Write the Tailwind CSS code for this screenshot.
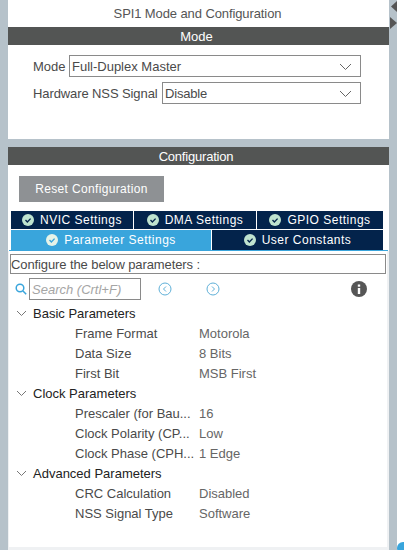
<!DOCTYPE html>
<html>
<head>
<script src="https://cdn.jsdelivr.net/npm/@tailwindcss/browser@4"></script>
</head>
<body class="m-0 bg-white">
<div class="relative w-[404px] h-[550px] overflow-hidden bg-white font-['Liberation_Sans',Arial,sans-serif] text-[13px] leading-none text-[#4a4a4a] whitespace-nowrap">
  <div class="w-[397px] h-[550px] bg-[#b6c2ca] pl-2 pr-2 flex flex-col">
    <section class="h-[139px] bg-white flex flex-col">
      <div class="h-[27px] flex items-center justify-center text-[#555] tracking-[-0.1px] pr-[2px]">SPI1 Mode and Configuration</div>
      <div class="h-[18px] bg-[#535554] text-white flex items-center justify-center pr-[4px]">Mode</div>
      <div class="pt-[10px] pl-[25px] flex flex-col gap-[5px]">
        <div class="flex items-center h-[22px]">
          <span class="w-[36px]">Mode</span>
          <div class="relative w-[292px] h-[22px] border border-[#8a8a8a] flex items-center pl-[2px]">Full-Duplex Master
            <svg class="absolute right-[8px] top-[7px]" width="13" height="8" viewBox="0 0 13 8" fill="none" stroke="#666" stroke-width="1"><path d="M1 1l5.500 5.500L12 1"/></svg>
          </div>
        </div>
        <div class="flex items-center h-[22px]">
          <span class="w-[129px] tracking-[-0.1px]">Hardware NSS Signal</span>
          <div class="relative w-[199px] h-[22px] border border-[#8a8a8a] flex items-center pl-[2px] tracking-[-0.2px]">Disable
            <svg class="absolute right-[8px] top-[7px]" width="13" height="8" viewBox="0 0 13 8" fill="none" stroke="#666" stroke-width="1"><path d="M1 1l5.500 5.500L12 1"/></svg>
          </div>
        </div>
      </div>
    </section>
    <section class="mt-2 h-[403px] bg-white flex flex-col">
      <div class="h-[18px] bg-[#535554] text-white flex items-center justify-center tracking-[-0.2px] pr-[5px]">Configuration</div>
      <div class="mt-[11px] ml-[11px] w-[145px] h-[26px] bg-[#8e9194] text-white text-[12px] flex items-center justify-center tracking-[0.35px]">Reset Configuration</div>
      <div class="mt-[9px] ml-[3px] w-[372px] flex flex-col text-white text-[12px] tracking-[0.5px]">
        <div class="h-[18px] flex bg-[#03234b]">
          <div class="w-[123px] flex items-center justify-center gap-[6px] border-r border-white"><svg width="12" height="12" viewBox="0 0 13 13"><circle cx="6.500" cy="6.500" r="6.500" fill="#bfe3cf"/><path d="M3.800 6.600l2 2 3.500-3.600" fill="none" stroke="#03234b" stroke-width="1.500"/></svg>NVIC Settings</div>
          <div class="w-[123px] flex items-center justify-center gap-[6px] border-r border-white"><svg width="12" height="12" viewBox="0 0 13 13"><circle cx="6.500" cy="6.500" r="6.500" fill="#bfe3cf"/><path d="M3.800 6.600l2 2 3.500-3.600" fill="none" stroke="#03234b" stroke-width="1.500"/></svg>DMA Settings</div>
          <div class="flex-1 flex items-center justify-center gap-[6px]"><svg width="12" height="12" viewBox="0 0 13 13"><circle cx="6.500" cy="6.500" r="6.500" fill="#bfe3cf"/><path d="M3.800 6.600l2 2 3.500-3.600" fill="none" stroke="#03234b" stroke-width="1.500"/></svg>GPIO Settings</div>
        </div>
        <div class="mt-[1px] h-[20px] flex bg-[#03234b]">
          <div class="w-[201px] bg-[#39a5dc] flex items-center justify-center gap-[6px] border-r border-white"><svg width="12" height="12" viewBox="0 0 13 13"><circle cx="6.500" cy="6.500" r="6.500" fill="#e6f3e8"/><path d="M3.800 6.600l2 2 3.500-3.600" fill="none" stroke="#39a5dc" stroke-width="1.500"/></svg>Parameter Settings</div>
          <div class="flex-1 flex items-center justify-center gap-[6px]"><svg width="12" height="12" viewBox="0 0 13 13"><circle cx="6.500" cy="6.500" r="6.500" fill="#bfe3cf"/><path d="M3.800 6.600l2 2 3.500-3.600" fill="none" stroke="#03234b" stroke-width="1.500"/></svg>User Constants</div>
        </div>
      </div>
      <div class="ml-[1px] w-[379px] h-[1px] bg-[#39a5dc]"></div>
      <div class="flex-1 flex flex-col border-l border-r-2 border-b-[3px] border-[#eff1f3] px-[1px]">
        <div class="h-[20px] mt-[3px] border border-[#8a8a8a] flex items-center tracking-[-0.1px]">Configure the below parameters :</div>
        <div class="relative h-[22px] mt-[4px] flex items-center">
          <svg class="ml-[5px]" width="12" height="12" viewBox="0 0 12 12" fill="none" stroke="#39a5dc" stroke-width="1.500"><circle cx="5" cy="5" r="3.800"/><path d="M8 8l3.200 3.200"/></svg>
          <div class="ml-[2px] w-[112px] h-[22px] border border-[#8a8a8a] flex items-center pl-[2px] italic text-[#a5a5a5]">Search (Crtl+F)</div>
          <svg class="ml-[17px]" width="14" height="14" viewBox="0 0 14 14" fill="none" stroke="#5fb0d8"><circle cx="7" cy="7" r="6"/><path d="M8 4.500L5.500 7 8 9.500"/></svg>
          <svg class="ml-[34px]" width="14" height="14" viewBox="0 0 14 14" fill="none" stroke="#5fb0d8"><circle cx="7" cy="7" r="6"/><path d="M6 4.500L8.500 7 6 9.500"/></svg>
          <svg class="ml-[131px]" width="16" height="16" viewBox="0 0 16 16"><circle cx="8" cy="8" r="8" fill="#565656"/><rect x="6.800" y="7" width="2.400" height="6" fill="#fff"/><rect x="6.800" y="3.500" width="2.400" height="2.200" fill="#fff"/></svg>
        </div>
        <div class="mt-[3px] flex flex-col">
          <div class="h-[20px] flex items-center"><svg class="ml-[6px]" width="11" height="7" viewBox="0 0 11 7" fill="none" stroke="#777"><path d="M1 1l4.500 4.500L10 1"/></svg><span class="ml-[6px] text-[#222]">Basic Parameters</span></div>
          <div class="h-[20px] flex items-center pl-[65px]"><span class="w-[124px]">Frame Format</span><span class="text-[#666]">Motorola</span></div>
          <div class="h-[20px] flex items-center pl-[65px]"><span class="w-[124px]">Data Size</span><span class="text-[#666]">8 Bits</span></div>
          <div class="h-[20px] flex items-center pl-[65px]"><span class="w-[124px]">First Bit</span><span class="text-[#666]">MSB First</span></div>
          <div class="h-[20px] flex items-center"><svg class="ml-[6px]" width="11" height="7" viewBox="0 0 11 7" fill="none" stroke="#777"><path d="M1 1l4.500 4.500L10 1"/></svg><span class="ml-[6px] text-[#222]">Clock Parameters</span></div>
          <div class="h-[20px] flex items-center pl-[65px]"><span class="w-[124px]">Prescaler (for Bau...</span><span class="text-[#666]">16</span></div>
          <div class="h-[20px] flex items-center pl-[65px]"><span class="w-[124px]">Clock Polarity (CP...</span><span class="text-[#666]">Low</span></div>
          <div class="h-[20px] flex items-center pl-[65px]"><span class="w-[124px]">Clock Phase (CPH...</span><span class="text-[#666]">1 Edge</span></div>
          <div class="h-[20px] flex items-center"><svg class="ml-[6px]" width="11" height="7" viewBox="0 0 11 7" fill="none" stroke="#777"><path d="M1 1l4.500 4.500L10 1"/></svg><span class="ml-[6px] text-[#222]">Advanced Parameters</span></div>
          <div class="h-[20px] flex items-center pl-[65px]"><span class="w-[124px]">CRC Calculation</span><span class="text-[#666]">Disabled</span></div>
          <div class="h-[20px] flex items-center pl-[65px]"><span class="w-[124px]">NSS Signal Type</span><span class="text-[#666]">Software</span></div>
        </div>
      </div>
    </section>
  </div>
  <svg class="absolute left-[390px] top-0" width="7" height="32" viewBox="0 0 7 32" fill="#555"><path d="M7 1v11L1 6.500z"/><path d="M0 17v12l7-6z"/></svg>
  <div class="absolute left-[397px] top-[542px] w-[12px] h-[12px] rounded-full bg-[#39a5dc]"></div>
</div>
</body>
</html>
